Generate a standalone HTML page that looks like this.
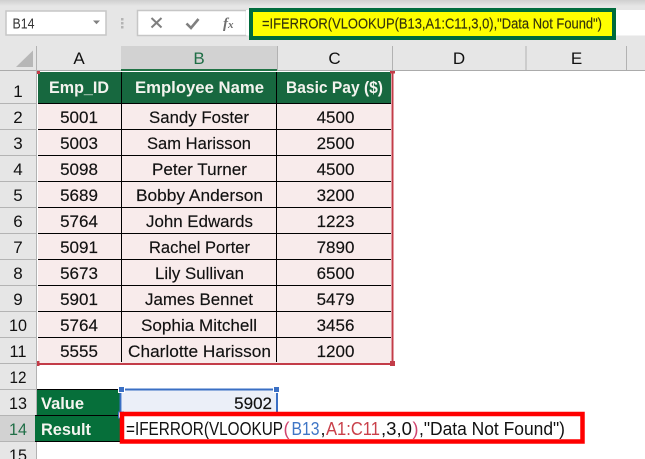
<!DOCTYPE html>
<html><head><meta charset="utf-8"><style>
html,body{margin:0;padding:0;background:#fff}
svg{display:block;font-family:"Liberation Sans",sans-serif}
</style></head><body>
<svg width="645" height="459" viewBox="0 0 645 459" xmlns="http://www.w3.org/2000/svg">
<defs><linearGradient id="t" x1="0" y1="0" x2="0" y2="1"><stop offset="0" stop-color="#cfcfcf"/><stop offset="1" stop-color="#e6e6e6"/></linearGradient></defs>
<rect width="645" height="459" fill="#fff"/>
<!-- top bar -->
<rect width="645" height="70" fill="#e6e6e6"/>
<rect width="645" height="6" fill="url(#t)"/>
<rect x="6" y="11" width="100" height="24" fill="#fff" stroke="#c6c6c6" stroke-width="1.5"/>
<text x="12.500" y="28.500" font-size="14.500" fill="#333" textLength="22" lengthAdjust="spacingAndGlyphs">B14</text>
<path d="M93 20.500h7l-3.500 3.800z" fill="#808080"/>
<path d="M121 18h2.500v2.500h-2.500zM121 22h2.500v2.500h-2.500zM121 26h2.500v2.500h-2.500z" fill="#b4b4b4"/>
<rect x="137.500" y="10.500" width="109" height="25" fill="#fff" stroke="#c6c6c6" stroke-width="1.500"/>
<path d="M151.500 18l10 9.500M161.500 18l-10 9.500" stroke="#7f7f7f" stroke-width="2" fill="none"/>
<path d="M186.500 23.500l4.500 4.500 7.500-9" stroke="#7f7f7f" stroke-width="2.600" fill="none"/>
<text x="223" y="28" font-size="15" font-family="Liberation Serif,serif" font-style="italic" font-weight="bold" fill="#707070">f<tspan font-size="11">x</tspan></text>
<rect x="246" y="10" width="399" height="25.500" fill="#fff"/>
<rect x="251" y="10" width="363" height="28" fill="#ffff00" stroke="#006b3c" stroke-width="4"/>
<text x="262" y="28.500" font-size="15" fill="#33330c" stroke="#33330c" stroke-width=".15" textLength="340" lengthAdjust="spacingAndGlyphs">=IFERROR(VLOOKUP(B13,A1:C11,3,0),"Data Not Found")</text>
<!-- column headers -->
<rect x="121" y="46" width="156" height="24" fill="#d2d2d2"/>
<rect x="121" y="69" width="156" height="2" fill="#217346"/>
<rect x="0" y="70" width="121" height="1" fill="#ababab"/>
<rect x="277" y="70" width="368" height="1" fill="#ababab"/>
<path d="M33 50.500v16.500h-17z" fill="#b7b7b7"/>
<path d="M36.500 46v413M277.500 46v24M392.500 46v24M526 46v24M626.500 46v24" stroke="#b2b2b2" stroke-width="1" fill="none"/>
<g font-size="17" text-anchor="middle" fill="#111">
<text x="79" y="64">A</text><text x="199" y="64" fill="#1f6e46">B</text><text x="334.500" y="64">C</text><text x="459" y="64">D</text><text x="576.500" y="64">E</text>
</g>
<!-- row headers -->
<rect x="0" y="71" width="36" height="388" fill="#e6e6e6"/>
<rect x="0" y="416" width="36" height="26" fill="#d2d2d2"/>
<path d="M0 103.500h36M0 129.500h36M0 155.500h36M0 181.500h36M0 207.500h36M0 233.500h36M0 259.500h36M0 285.500h36M0 311.500h36M0 337.500h36M0 363.500h36M0 389.500h36M0 415.500h36M0 441.500h36" stroke="#b4b4b4" fill="none"/>
<g font-size="17" text-anchor="middle" fill="#111">
<text x="18" y="97">1</text><text x="18" y="123">2</text><text x="18" y="149">3</text><text x="18" y="175">4</text><text x="18" y="201">5</text><text x="18" y="227">6</text><text x="18" y="253">7</text><text x="18" y="279">8</text><text x="18" y="305">9</text><text x="18" y="331" textLength="18" lengthAdjust="spacingAndGlyphs">10</text><text x="18" y="357" textLength="17" lengthAdjust="spacingAndGlyphs">11</text><text x="18" y="383" textLength="17" lengthAdjust="spacingAndGlyphs">12</text><text x="18" y="409" textLength="18" lengthAdjust="spacingAndGlyphs">13</text><text x="18" y="435" textLength="18" lengthAdjust="spacingAndGlyphs" fill="#1f6e46">14</text><text x="18" y="461" textLength="18" lengthAdjust="spacingAndGlyphs">15</text>
</g>
<!-- table -->
<rect x="38" y="72" width="353" height="31" fill="#17683f"/>
<rect x="38" y="104" width="353" height="259" fill="#f8ebeb"/>
<path d="M38 103.500h353M38 129.500h353M38 155.500h353M38 181.500h353M38 207.500h353M38 233.500h353M38 259.500h353M38 285.500h353M38 311.500h353M38 337.500h353" stroke="#000" fill="none"/>
<path d="M121.500 72v290M276.500 72v290" stroke="#000" fill="none"/>
<g font-size="17" font-weight="bold" fill="#f3f3ee" text-anchor="middle">
<text x="79" y="93" textLength="60" lengthAdjust="spacingAndGlyphs">Emp_ID</text>
<text x="199.500" y="93" textLength="129" lengthAdjust="spacingAndGlyphs">Employee Name</text>
<text x="334.500" y="93" textLength="97" lengthAdjust="spacingAndGlyphs">Basic Pay ($)</text>
</g>
<g font-size="17" fill="#111" stroke="#111" stroke-width=".15" text-anchor="middle">
<g>
<text x="79" y="123">5001</text><text x="79" y="149">5003</text><text x="79" y="175">5098</text><text x="79" y="201">5689</text><text x="79" y="227">5764</text><text x="79" y="253">5091</text><text x="79" y="279">5673</text><text x="79" y="305">5901</text><text x="79" y="331">5764</text><text x="79" y="357">5555</text>
</g>
<g>
<text x="199" y="123" textLength="100" lengthAdjust="spacingAndGlyphs">Sandy Foster</text>
<text x="199" y="149" textLength="104" lengthAdjust="spacingAndGlyphs">Sam Harisson</text>
<text x="199.500" y="175" textLength="95" lengthAdjust="spacingAndGlyphs">Peter Turner</text>
<text x="199.500" y="201" textLength="127" lengthAdjust="spacingAndGlyphs">Bobby Anderson</text>
<text x="199.500" y="227" textLength="107" lengthAdjust="spacingAndGlyphs">John Edwards</text>
<text x="199.500" y="253" textLength="101" lengthAdjust="spacingAndGlyphs">Rachel Porter</text>
<text x="199.500" y="279" textLength="89" lengthAdjust="spacingAndGlyphs">Lily Sullivan</text>
<text x="199" y="305" textLength="108" lengthAdjust="spacingAndGlyphs">James Bennet</text>
<text x="199" y="331" textLength="116" lengthAdjust="spacingAndGlyphs">Sophia Mitchell</text>
<text x="199.500" y="357" textLength="143" lengthAdjust="spacingAndGlyphs">Charlotte Harisson</text>
</g>
<g>
<text x="335.500" y="123">4500</text><text x="335.500" y="149">2500</text><text x="335.500" y="175">4500</text><text x="335.500" y="201">3200</text><text x="335.500" y="227">1223</text><text x="335.500" y="253">7890</text><text x="335.500" y="279">6500</text><text x="335.500" y="305">5479</text><text x="335.500" y="331">3456</text><text x="335.500" y="357">1200</text>
</g>
</g>
<!-- selection red -->
<rect x="391.500" y="72" width="2" height="292" fill="#c33c48"/>
<rect x="38" y="363" width="355" height="2" fill="#c33c48"/>
<rect x="38" y="71" width="353" height="1" fill="#fff"/>
<rect x="37" y="71" width="3" height="3" fill="#c33c48"/>
<rect x="390" y="71" width="5" height="2.500" fill="#c33c48"/>
<rect x="37" y="361" width="2.500" height="5" fill="#c33c48"/>
<rect x="390" y="361" width="5" height="5" fill="#c33c48"/>
<!-- value/result -->
<rect x="37" y="389" width="83" height="27" fill="#066f3a"/>
<rect x="35" y="416" width="86" height="26" fill="#066f3a"/>
<path d="M37 389.500h83M35 415.500h85M35 441.500h86" stroke="#000" fill="none"/>
<g font-size="17" font-weight="bold" fill="#f5f5f0">
<text x="41" y="409" textLength="43" lengthAdjust="spacingAndGlyphs">Value</text>
<text x="41" y="435" textLength="50" lengthAdjust="spacingAndGlyphs">Result</text>
</g>
<rect x="122" y="390" width="155" height="24" fill="#ebeff8"/>
<path d="M124 389.500h152M120.500 389v24M277 389v24" stroke="#3a6fc4" stroke-width="2" fill="none"/>
<rect x="118.500" y="386.500" width="6" height="6" fill="#3a6fc4" stroke="#fff" stroke-width="1"/>
<rect x="273.500" y="386.500" width="6" height="6" fill="#3a6fc4" stroke="#fff" stroke-width="1"/>
<rect x="118.500" y="412" width="5" height="6" fill="#fff" stroke="#3a6fc4" stroke-width="1"/>
<text x="272" y="409" font-size="17" fill="#111" stroke="#111" stroke-width=".15" text-anchor="end">5902</text>
<!-- red box -->
<rect x="122" y="414" width="460.500" height="27.500" fill="#fff" stroke="#ff0000" stroke-width="4.500"/>
<g font-size="18" fill="#111" stroke-width=".1">
<text x="126" y="435" textLength="157" lengthAdjust="spacingAndGlyphs">=IFERROR(VLOOKUP</text>
<text x="283.500" y="435" fill="#d0436e">(</text>
<text x="291.500" y="435" fill="#3f76c6" textLength="28" lengthAdjust="spacingAndGlyphs">B13</text>
<text x="320.500" y="435">,</text>
<text x="326" y="435" fill="#c9404a" textLength="54" lengthAdjust="spacingAndGlyphs">A1:C11</text>
<text x="381" y="435" textLength="31" lengthAdjust="spacingAndGlyphs">,3,0</text>
<text x="412.500" y="435" fill="#d0436e">)</text>
<text x="419" y="435" textLength="146" lengthAdjust="spacingAndGlyphs">,"Data Not Found")</text>
</g>
</svg>
</body></html>
